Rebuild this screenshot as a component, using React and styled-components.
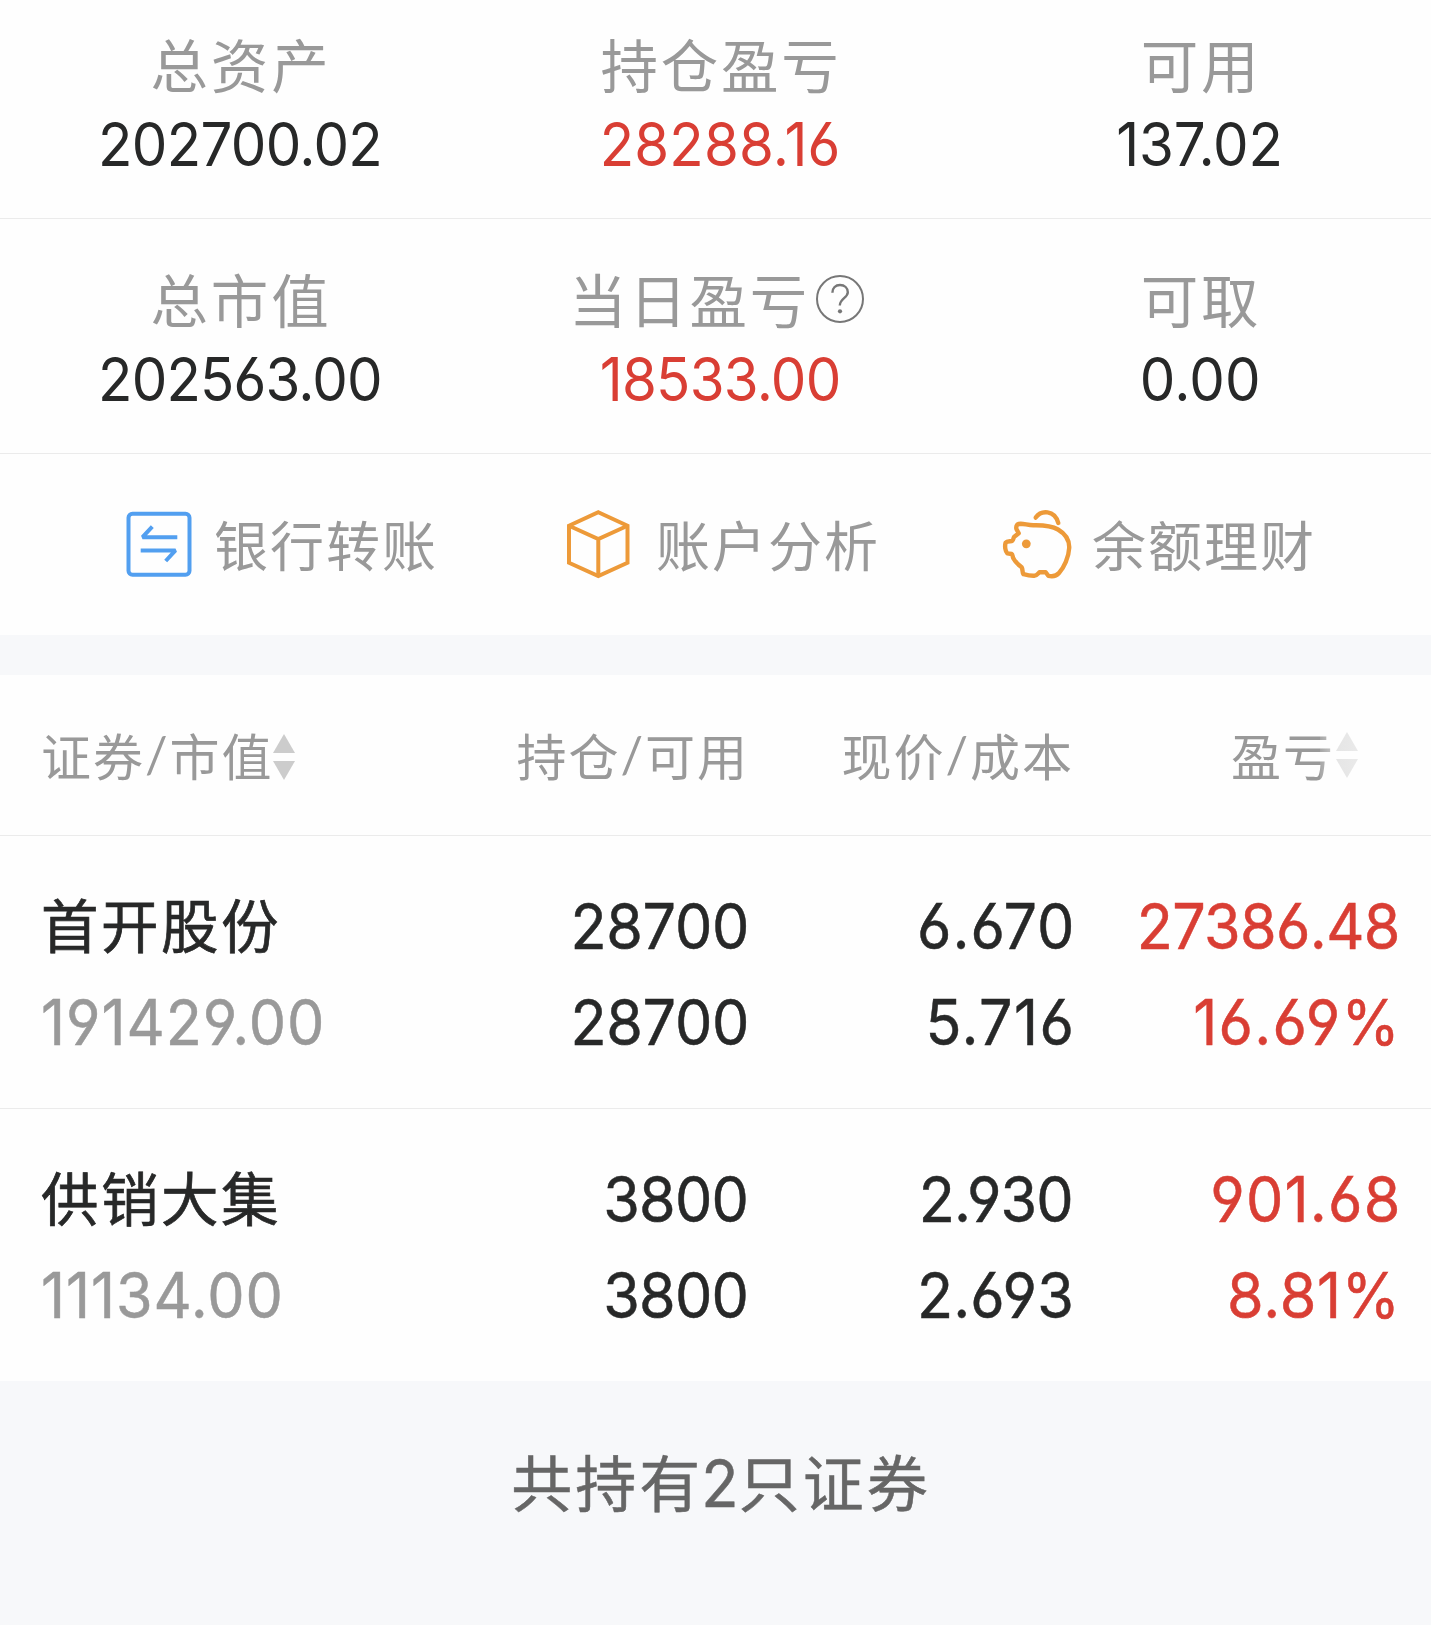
import React from 'react';
import styled, { createGlobalStyle } from 'styled-components';

const GlobalStyle = createGlobalStyle`
    * {
        box-sizing: border-box;
    }

    body {
        margin: 0;
        background: #f7f8fa;
        font-family: "Noto Sans CJK SC", sans-serif;
        -webkit-font-smoothing: antialiased;
    }
`;

const colors = {
    dark: '#272828',
    red: '#d93e34',
    grey: '#999'
};

const Page = styled.main`
    width: 1431px;
    min-height: 1625px;
    overflow: hidden;
    background: #f7f8fa;
`;

const Panel = styled.section`
    background: #fefefe;
`;

/* three equal columns, the last one runs slightly past the screen edge */
const SummaryRow = styled.div`
    display: grid;
    grid-template-columns: repeat(3, 480px);
    height: ${p => p.$height}px;
    padding-top: ${p => p.$top}px;
    border-bottom: 1px solid #ebebeb;
`;

const SummaryCell = styled.div`
    display: flex;
    flex-direction: column;
    align-items: center;
`;

const SummaryLabel = styled.div`
    display: flex;
    align-items: center;
    height: 78px;
    padding: 0 0 6px 2px;
    font-size: 57.5px;
    letter-spacing: 2.8px;
    color: ${colors.grey};
    white-space: nowrap;
`;

/* figures are slightly condensed */
const Digits = styled.span`
    display: block;
    height: 78px;
    line-height: 78px;
    margin-right: ${p => -p.$track}px;
    font-family: Inter, sans-serif;
    font-size: 60px;
    font-feature-settings: 'cv03', 'cv04';
    letter-spacing: ${p => p.$track}px;
    color: ${p => colors[p.$color || 'dark']};
    white-space: nowrap;
    transform: scaleX(0.94);
`;

const TableDigits = styled(Digits)`
    height: 96px;
    line-height: 95px;
    font-size: 63px;
    -webkit-text-stroke: 0.5px;
    transform-origin: ${p => (p.$left ? 'left' : 'right')};
`;

const HelpSvg = styled.svg`
    flex: none;
    width: 50px;
    height: 50px;
    margin: 1px 8px 0 5px;
`;

const Shortcuts = styled.nav`
    display: grid;
    grid-template-columns: 442px 436px auto;
    height: 181px;
    padding: 55px 0 0 124px;
`;

const Shortcut = styled.a`
    display: flex;
    align-items: center;
    height: 70px;
    gap: 22px;
    font-size: 54px;
    letter-spacing: 2px;
    color: ${colors.grey};
    white-space: nowrap;

    > svg {
        flex: none;
        display: block;
        width: 68px;
        overflow: visible;
    }
`;

const ShortcutText = styled.span`
    line-height: 70px;
`;

const Band = styled.div`
    height: 40px;
`;

const TableRow = styled.div`
    position: relative;
    display: grid;
    grid-template-columns: 388px 320px 325px 326px;
    padding-left: 41px;
    border-bottom: ${p => (p.$last ? 'none' : '1px solid #ebebeb')};
`;

const HeadRow = styled(TableRow)`
    height: 161px;
    padding-top: 44px;
    font-size: 50px;
    letter-spacing: 2px;
    line-height: 70px;
    color: ${colors.grey};
`;

const HoldingRow = styled(TableRow)`
    height: ${p => (p.$last ? 272 : 273)}px;
    padding-top: 43px;
`;

const HeadCell = styled.div`
    display: flex;
    justify-content: ${p => (p.$left ? 'flex-start' : 'flex-end')};
    padding-right: ${p => p.$inset || 0}px;
    white-space: nowrap;
`;

const Slash = styled.span`
    font-family: Lato, sans-serif;
`;

const SortSvg = styled.svg`
    flex: none;
    width: 22px;
    height: 46px;
    margin-top: ${p => p.$top}px;
    margin-left: ${p => p.$gap}px;
`;

const EdgeFade = styled.div`
    position: absolute;
    top: 0;
    right: 0;
    bottom: 0;
    width: 111px;
    background: linear-gradient(90deg, rgba(254, 254, 254, 0.12), rgba(254, 254, 254, 0.5) 14%, rgba(254, 254, 254, 0.6) 36%, #fefefe);
`;

const Cell = styled.div`
    display: flex;
    flex-direction: column;
    align-items: ${p => (p.$left ? 'flex-start' : 'flex-end')};
`;

const StockName = styled.span`
    height: 96px;
    line-height: 88px;
    font-size: 57.5px;
    letter-spacing: 2.5px;
    -webkit-text-stroke: 0.7px;
    color: ${colors.dark};
`;

const Footer = styled.footer`
    display: flex;
    justify-content: center;
    align-items: baseline;
    padding-top: 55px;
    padding-left: 11px;
    line-height: 90px;
    font-size: 61px;
    letter-spacing: 3px;
    -webkit-text-stroke: 0.5px;
    color: #666;
`;

const FooterCount = styled.span`
    margin: 0 1px 0 -3px;
    font-family: Inter, sans-serif;
    font-size: 65px;
    letter-spacing: -2px;
    transform: scaleX(0.94);
`;

const HelpIcon = () => (
    <HelpSvg viewBox="-25 -25 50 50" fill="none" stroke="#777" strokeWidth="2">
        <circle r="23" />
        <path d="M-7.6 -6.2C-7.6 -11 -4.4 -14 0 -14C4.6 -14 7.8 -11 7.8 -6.8C7.8 -1 -0.2 -0.5 -0.2 6.5" strokeWidth="2.4" />
        <circle cy="12.3" r="2.1" fill="#777" stroke="none" />
    </HelpSvg>
);

const TransferIcon = () => (
    <svg height="66" viewBox="-2 0 68 66" fill="none" stroke="#529ff0" strokeWidth="4">
        <rect x="2.5" y="2.7" width="61" height="61" rx="4" />
        <path d="M51.3 26.2H16.5L26.3 15.6M14.7 39.4H49.5L39.7 50" strokeLinejoin="bevel" />
    </svg>
);

const CubeIcon = () => (
    <svg height="70" viewBox="0 0 68 70" fill="none" stroke="#ed9a39" strokeWidth="4">
        <path d="M32.3 3.2L61.5 16.7V53.7L32.3 67L3 53.7V16.7Z" />
        <path d="M3 16.7L32.3 30L61.5 16.7M32.3 30V67" />
    </svg>
);

const PigIcon = () => (
    <svg height="70" viewBox="0 0 68 70" fill="none" stroke="#ed9a39" strokeWidth="4.4" strokeLinecap="round" strokeLinejoin="round">
        <path d="M33.7 8.6C39 1 52.5 .5 56.3 14" />
        <path d="M16.7 24.3L14.4 20C13.8 16.5 15 14.7 18.7 14.7C23 14.8 26 16.3 31.3 16.3C44 16 50 17 56 20.5C64.5 25.5 67.5 32 67.2 39C66.8 48 62 58.5 57 64C54 67.5 49 67.4 46.3 66.8L43.7 63.3H37.3C35.5 65 35 66.7 32.3 66.8C28 67 25 66.2 21.5 65.2C20 63.5 21 60.5 19.7 58.3C16.5 56 13 52.5 11.3 49.3C10.5 47.5 10.7 45.5 9.7 45L5.3 44.3C3.2 42.5 2.6 37 3.6 33.6C5 32 9 32.4 10.3 31.7C11.7 30.7 11.2 28.7 12.3 27.7Z" />
        <circle cx="24.3" cy="34.8" r="4.4" fill="#ed9a39" stroke="none" />
    </svg>
);

const SortIcon = ({ top, gap }) => (
    <SortSvg $top={top} $gap={gap} viewBox="0 0 22 46" fill="#ccc">
        <path d="M11 0L22 19H0Z" />
        <path d="M11 46L22 27H0Z" />
    </SortSvg>
);

const summary = [
    [
        { label: '总资产', value: '202700.02', track: -0.7 },
        { label: '持仓盈亏', value: '28288.16', track: 0.2, color: 'red' },
        { label: '可用', value: '137.02', track: -0.2 }
    ],
    [
        { label: '总市值', value: '202563.00', track: -0.85 },
        { label: '当日盈亏', value: '18533.00', track: -0.75, color: 'red', help: true },
        { label: '可取', value: '0.00', track: 0.2 }
    ]
];

const shortcuts = [
    { label: '银行转账', Icon: TransferIcon },
    { label: '账户分析', Icon: CubeIcon },
    { label: '余额理财', Icon: PigIcon }
];

/* every figure is [text, tracking] */
const holdings = [
    {
        name: '首开股份',
        value: ['191429.00', 1],
        amount: [['28700', -0.3], ['28700', -0.3]],
        price: [['6.670', 1], ['5.716', 1.5]],
        profit: [['27386.48', -0.7], ['16.69%', 1.3]]
    },
    {
        name: '供销大集',
        value: ['11134.00', 1],
        amount: [['3800', -0.8], ['3800', -0.8]],
        price: [['2.930', -1], ['2.693', 0.1]],
        profit: [['901.68', 1.3], ['8.81%', 0.8]]
    }
];

const Figures = ({ items, color }) => (
    <Cell>
        {items.map(([text, track], i) => (
            <TableDigits key={i} $track={track} $color={color}>{text}</TableDigits>
        ))}
    </Cell>
);

const App = () => (
    <Page>
        <GlobalStyle />
        <Panel>
            {summary.map((row, i) => (
                <SummaryRow key={i} $height={i ? 235 : 219} $top={i ? 43 : 27}>
                    {row.map(({ label, value, track, color, help }) => (
                        <SummaryCell key={label}>
                            <SummaryLabel>
                                {label}
                                {help && <HelpIcon />}
                            </SummaryLabel>
                            <Digits $track={track} $color={color}>{value}</Digits>
                        </SummaryCell>
                    ))}
                </SummaryRow>
            ))}
            <Shortcuts>
                {shortcuts.map(({ label, Icon }) => (
                    <Shortcut key={label}>
                        <Icon />
                        <ShortcutText>{label}</ShortcutText>
                    </Shortcut>
                ))}
            </Shortcuts>
        </Panel>
        <Band />
        <Panel>
            <HeadRow>
                <HeadCell $left>证券<Slash>/</Slash>市值<SortIcon top={15} gap={-1} /></HeadCell>
                <HeadCell>持仓<Slash>/</Slash>可用</HeadCell>
                <HeadCell>现价<Slash>/</Slash>成本</HeadCell>
                <HeadCell $inset={42}>盈亏<SortIcon top={13} gap={1} /></HeadCell>
                <EdgeFade />
            </HeadRow>
            {holdings.map(({ name, value, amount, price, profit }, i) => (
                <HoldingRow key={name} $last={i === holdings.length - 1}>
                    <Cell $left>
                        <StockName>{name}</StockName>
                        <TableDigits $left $track={value[1]} $color="grey">{value[0]}</TableDigits>
                    </Cell>
                    <Figures items={amount} />
                    <Figures items={price} />
                    <Figures items={profit} color="red" />
                </HoldingRow>
            ))}
        </Panel>
        <Footer>共持有<FooterCount>2</FooterCount>只证券</Footer>
    </Page>
);

export default App;
